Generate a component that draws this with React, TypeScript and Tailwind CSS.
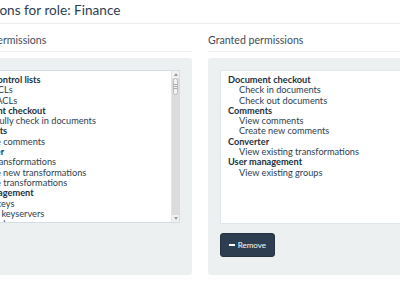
import React from "react";

type Group = { name: string; items: string[] };

const available: Group[] = [
  { name: "Access control lists", items: ["Edit ACLs", "View ACLs"] },
  { name: "Document checkout", items: ["Forcefully check in documents"] },
  { name: "Comments", items: ["Delete comments"] },
  { name: "Converter", items: ["Edit transformations", "Create new transformations", "Delete transformations"] },
  { name: "Key management", items: ["View keys", "Query keyservers", "Delete keys", "Upload keys"] },
  { name: "Documents", items: ["Create documents", "Delete documents"] },
];

const granted: Group[] = [
  { name: "Document checkout", items: ["Check in documents", "Check out documents"] },
  { name: "Comments", items: ["View comments", "Create new comments"] },
  { name: "Converter", items: ["View existing transformations"] },
  { name: "User management", items: ["View existing groups"] },
];

function GroupList({ groups, pad }: { groups: Group[]; pad: string }) {
  return (
    <div className={`flex-1 ${pad} pt-[4px] text-[9.2px] leading-[10.3px] text-[#2c3e50] whitespace-nowrap`}>
      {groups.map((g) => (
        <div key={g.name}>
          <div className="font-bold text-[#22303d]">{g.name}</div>
          {g.items.map((it) => (
            <div key={it} className="pl-[11px]">
              {it}
            </div>
          ))}
        </div>
      ))}
    </div>
  );
}

function Scrollbar() {
  return (
    <div className="w-[8px] flex flex-col bg-[#dcdcdc] border-l border-[#e4e4e4]">
      <div className="h-[7px] bg-[#f2f2f2] flex items-center justify-center">
        <div className="w-0 h-0 border-x-[2px] border-x-transparent border-b-[3px] border-b-[#999]" />
      </div>
      <div className="h-[17px] mx-[1px] rounded-[3px] bg-[#f4f4f4] border border-[#bbb] flex flex-col items-center justify-center gap-[1px]">
        <div className="w-[3px] h-px bg-[#aaa]" />
        <div className="w-[3px] h-px bg-[#aaa]" />
        <div className="w-[3px] h-px bg-[#aaa]" />
      </div>
      <div className="flex-1" />
      <div className="h-[7px] bg-[#f2f2f2] flex items-center justify-center">
        <div className="w-0 h-0 border-x-[2px] border-x-transparent border-t-[3px] border-t-[#999]" />
      </div>
    </div>
  );
}

function Panel({ title, children }: { title: string; children: React.ReactNode }) {
  return (
    <div className="flex flex-col">
      <div className="text-[10.6px] leading-[13px] text-[#3e4c59] pb-[4px] border-b border-[#eef0f1]">
        {title}
      </div>
      <div className="mt-[6px] flex-1 bg-[#ecf0f1] rounded-[3px] p-[12px] pb-[18px]">{children}</div>
    </div>
  );
}

export default function App() {
  return (
    <div
      className="w-[400px] h-[284px] overflow-hidden bg-white"
      style={{ fontFamily: "Lato, 'Open Sans', sans-serif" }}
    >
      <div className="ml-[-53px] w-[510px]">
        <h3 className="pl-[3px] pt-[2px] text-[13.6px] leading-[17px] text-[#2c3e50]">Permissions for role: Finance</h3>
        <div className="mt-[4px] border-t border-[#eeeeee]" />
        <div className="mt-[10px] grid grid-cols-[245px_245px] gap-[16px]">
          <Panel title="Available permissions">
            <div className="h-[153px] bg-white border border-[#d5dde4] flex overflow-hidden">
              <GroupList groups={available} pad="pl-[3px]" />
              <Scrollbar />
            </div>
          </Panel>
          <Panel title="Granted permissions">
            <div className="h-[154px] bg-white border border-[#dfe6ec] flex overflow-hidden">
              <GroupList groups={granted} pad="pl-[7px]" />
            </div>
            <button className="mt-[9px] h-[24px] w-[55px] px-[8px] rounded-[3px] bg-[#2c3e50] border border-[#24333f] text-white text-[8px] flex items-center gap-[2px]">
              <span className="w-[6px] h-[2px] bg-white mr-[1px]" />
              Remove
            </button>
          </Panel>
        </div>
      </div>
    </div>
  );
}
